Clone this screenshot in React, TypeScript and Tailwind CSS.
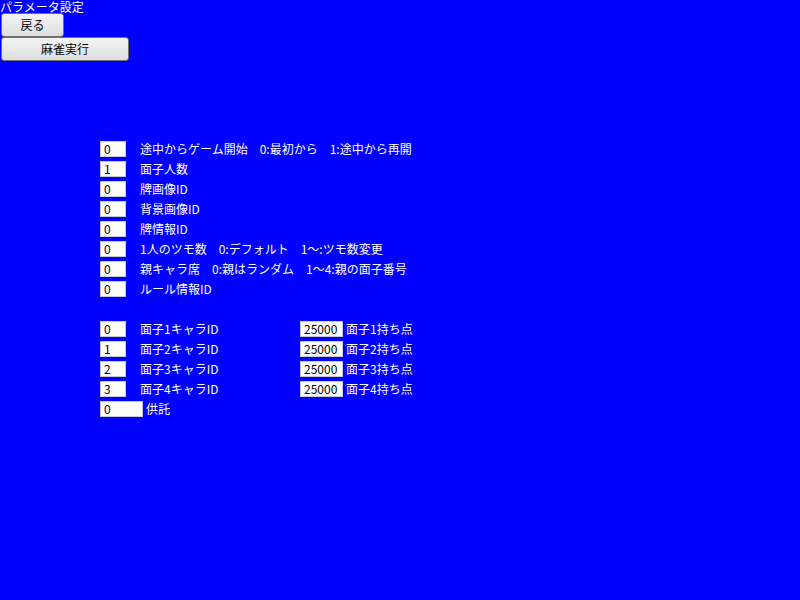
const font = { fontFamily: '"Noto Sans CJK JP", "Liberation Sans", sans-serif' }

interface IParam {
  value: string
  label: string
}

const params: IParam[] = [
  { value: '0', label: '途中からゲーム開始　0:最初から　1:途中から再開' },
  { value: '1', label: '面子人数' },
  { value: '0', label: '牌画像ID' },
  { value: '0', label: '背景画像ID' },
  { value: '0', label: '牌情報ID' },
  { value: '0', label: '1人のツモ数　0:デフォルト　1～:ツモ数変更' },
  { value: '0', label: '親キャラ席　0:親はランダム　1～4:親の面子番号' },
  { value: '0', label: 'ルール情報ID' },
]

const players = [1, 2, 3, 4]

function Field({ value, width }: { value: string; width: string }) {
  return (
    <div
      className={`${width} h-4 bg-white border border-[#c8c8d8] text-black text-[12px] leading-[14px] pl-[3px] shrink-0`}
    >
      {value}
    </div>
  )
}

function Button({ label, width }: { label: string; width: string }) {
  return (
    <button
      className={`block ${width} h-6 ml-px rounded-[3px] border border-[#707070] bg-gradient-to-b from-[#f4f4f4] to-[#dedede] text-black text-[12px] leading-none`}
    >
      {label}
    </button>
  )
}

export default function App() {
  return (
    <div className="w-[800px] h-[600px] bg-[#0000ff] text-white overflow-hidden" style={font}>
      <div className="text-[12px] leading-[13px] h-[13px]">パラメータ設定</div>
      <Button label="戻る" width="w-[63px]" />
      <Button label="麻雀実行" width="w-[128px]" />

      <div className="pl-[100px] pt-[80px] text-[12px] leading-4">
        {params.map((p, i) => (
          <div key={i} className="flex items-center h-4 mb-1">
            <Field value={p.value} width="w-[26px]" />
            <span className="ml-[14px] whitespace-pre">{p.label}</span>
          </div>
        ))}

        <div className="h-5" />

        {players.map((n) => (
          <div key={n} className="flex items-center h-4 mb-1">
            <Field value={String(n - 1)} width="w-[26px]" />
            <span className="ml-[14px] w-[160px]">面子{n}キャラID</span>
            <Field value="25000" width="w-[43px]" />
            <span className="ml-[3px]">面子{n}持ち点</span>
          </div>
        ))}

        <div className="flex items-center h-4">
          <Field value="0" width="w-[43px]" />
          <span className="ml-[3px]">供託</span>
        </div>
      </div>
    </div>
  )
}
